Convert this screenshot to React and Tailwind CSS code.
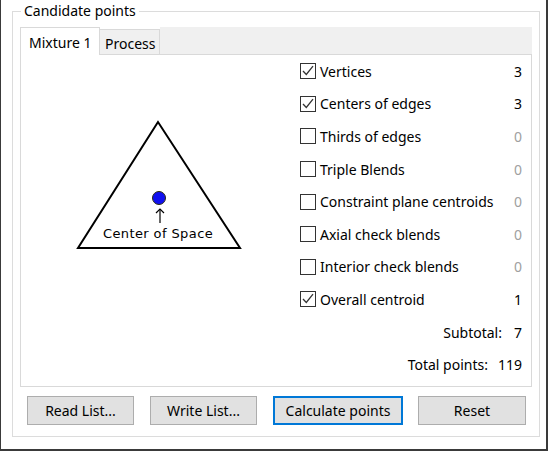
import React from "react";

const rows = [
  { label: "Vertices", checked: true, n: "3" },
  { label: "Centers of edges", checked: true, n: "3" },
  { label: "Thirds of edges", checked: false, n: "0" },
  { label: "Triple Blends", checked: false, n: "0" },
  { label: "Constraint plane centroids", checked: false, n: "0" },
  { label: "Axial check blends", checked: false, n: "0" },
  { label: "Interior check blends", checked: false, n: "0" },
  { label: "Overall centroid", checked: true, n: "1" },
];

function Box({ checked }) {
  return (
    <svg width="16" height="16" viewBox="0 0 16 16" className="shrink-0">
      <rect x="0.5" y="0.5" width="15" height="15" fill="#fff" stroke="#333" strokeWidth="1" />
      {checked && (
        <path d="M3 8 L6.3 11.5 L13 3.2" fill="none" stroke="#333" strokeWidth="1.3" />
      )}
    </svg>
  );
}

function Btn({ w, children, primary }) {
  return (
    <button
      className={
        "h-[29px] bg-[#e1e1e1] text-[14px] text-black flex items-center justify-center " +
        (primary ? "border-2 border-[#0078d7]" : "border border-[#adadad]") +
        " " +
        w
      }
    >
      {children}
    </button>
  );
}

export default function App() {
  return (
    <div className="w-[550px] h-[452px] bg-white">
      <div
        className="w-[548px] h-[451px] bg-white border-l border-r-2 border-b-2 border-[#3a3a3a] pl-[11px] text-black overflow-hidden"
        style={{ fontFamily: "'Noto Sans', 'Open Sans', sans-serif" }}
      >
        <fieldset className="mt-[1px] w-[528px] h-[436px] border border-[#dcdcdc]">
          <legend className="ml-[8px] px-[3px] text-[14px] leading-[20px]">Candidate points</legend>
          <div className="mt-[6px] ml-[7px] w-[512px]">
            <div className="flex h-[27px] items-start">
              <div className="relative z-10 w-[80px] h-[28px] bg-white border border-b-0 border-[#d9d9d9] text-[14px] flex items-center pl-[8px] pt-[1px]">
                Mixture 1
              </div>
              <div className="w-[60px] h-[25px] mt-[2px] bg-[#f0f0f0] border-t border-r border-[#d9d9d9] text-[14px] flex items-center pl-[5px] pt-[3px]">
                Process
              </div>
              <div className="flex-1 h-[27px] bg-[#f0f0f0]" />
            </div>
            <div className="h-[333px] border border-[#d9d9d9] bg-white flex">
              <div className="w-[279px] pl-[55px] pt-[65px]">
                <svg width="170" height="132" viewBox="0 0 170 132">
                  <polygon points="82,2 2,128 164,128" fill="#fff" stroke="#000" strokeWidth="2" strokeLinejoin="miter" />
                  <circle cx="83" cy="78" r="6.5" fill="#1010f0" stroke="#2a2a10" strokeWidth="1" />
                  <line x1="84" y1="89" x2="84" y2="103" stroke="#000" strokeWidth="1.2" />
                  <path d="M80 93 L84 89 L88 93" fill="none" stroke="#000" strokeWidth="1.2" />
                  <text
                    x="82"
                    y="118"
                    textAnchor="middle"
                    fontFamily="'DejaVu Sans', Verdana, sans-serif"
                    fontSize="13"
                    fontWeight="400"
                    letterSpacing="0.4"
                    fill="#000"
                  >
                    Center of Space
                  </text>
                </svg>
              </div>
              <div className="flex-1 pr-[9px] text-[14px]">
                {rows.map((r) => (
                  <div key={r.label} className="h-[32.6px] flex items-center">
                    <Box checked={r.checked} />
                    <span className="ml-[4px]">{r.label}</span>
                    <span className={"ml-auto " + (r.n === "0" ? "text-[#a0a0a0]" : "")}>{r.n}</span>
                  </div>
                ))}
                <div className="h-[32.6px] flex items-center justify-end">
                  <span>Subtotal:</span>
                  <span className="ml-[12px]">7</span>
                </div>
                <div className="h-[32.6px] flex items-center justify-end">
                  <span>Total points:</span>
                  <span className="ml-[10px]">119</span>
                </div>
              </div>
            </div>
            <div className="mt-[9px] ml-[7px] flex">
              <Btn w="w-[107px]">Read List...</Btn>
              <div className="w-[16px]" />
              <Btn w="w-[107px]">Write List...</Btn>
              <div className="w-[16px]" />
              <Btn w="w-[130px]" primary>Calculate points</Btn>
              <div className="w-[15px]" />
              <Btn w="w-[108px]">Reset</Btn>
            </div>
          </div>
        </fieldset>
      </div>
    </div>
  );
}
